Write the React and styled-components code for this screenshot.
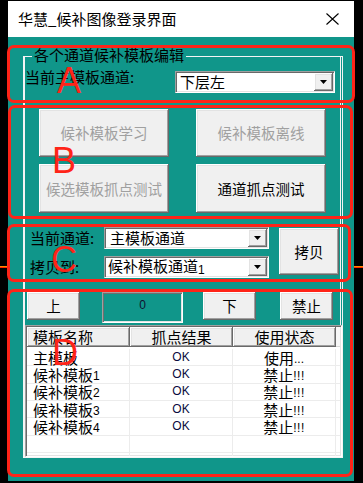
import React from 'react';
import styled, { createGlobalStyle } from 'styled-components';

const TEAL = '#10968a';
const RED = '#ff2418';
const CJK = `"Noto Sans CJK SC", "Noto Sans", sans-serif`;
const LATIN = `"Liberation Sans", Arial, sans-serif`;

const Global = createGlobalStyle`
  html, body { margin: 0; padding: 0; background: #000; }
  body { width: 363px; height: 483px; overflow: hidden; font-family: ${CJK}; color: #000; }
  * { box-sizing: border-box; }
`;

const raised = `
  background: #f0f0f0;
  border: none;
  box-shadow: inset -1px -1px 0 #696969, inset 1px 1px 0 #ffffff, inset -2px -2px 0 #a0a0a0, inset 2px 2px 0 #e3e3e3;
`;

const Page = styled.div`
  position: relative;
  width: 363px;
  height: 483px;
  background: #000;
  padding-top: 1px;
`;

const OrangeRule = styled.div`
  position: absolute;
  left: 0;
  top: 266px;
  width: 363px;
  height: 2px;
  border-top: 1px solid #ff8a00;
  border-bottom: 1px solid #ff2a00;
  z-index: 0;
`;

const Window = styled.div`
  position: relative;
  z-index: 1;
  margin-left: 8px;
  width: 346px;
  height: 480px;
  display: flex;
  flex-direction: column;
`;

const TitleBar = styled.div`
  height: 36px;
  background: #fff;
  display: flex;
  align-items: center;
  justify-content: space-between;
  padding: 0 15px 0 10px;
`;

const Title = styled.span`
  font-size: 15px;
  line-height: 18px;
  white-space: nowrap;
`;

const Body = styled.div`
  flex: 1;
  background: ${TEAL};
  padding: 19px 11px 0 15px;
`;

const GroupBox = styled.div`
  position: relative;
  display: flex;
  flex-direction: column;
  border-top: 1px solid #f4f4f4;
  border-left: 2px solid #f4f4f4;
  border-right: 3px double #f4f4f4;
  border-bottom: 1px solid #f4f4f4;
`;

const Legend = styled.span`
  position: absolute;
  left: 7px;
  top: -11px;
  padding: 0 2px;
  background: ${TEAL};
  font-size: 15px;
  line-height: 18px;
  white-space: nowrap;
`;

const RowA = styled.div`
  margin-top: 11px;
  display: flex;
  align-items: flex-start;
`;

const FieldLabel = styled.span`
  width: ${p => p.$w}px;
  flex: none;
  font-size: 15px;
  line-height: 18px;
  white-space: nowrap;
`;

const ComboBox = styled.div`
  flex: none;
  width: ${p => p.$w}px;
  height: 22px;
  margin-top: ${p => p.$mt || 0}px;
  background: #fff;
  border-top: 1px solid #a0a0a0;
  border-left: 1px solid #a0a0a0;
  border-right: 1px solid #ffffff;
  border-bottom: 1px solid #ffffff;
  box-shadow: inset 1px 1px 0 #696969, inset -1px -1px 0 #e3e3e3;
  padding: 1px;
  display: flex;
  align-items: center;
`;

const ComboText = styled.span`
  flex: 1;
  min-width: 0;
  padding-left: ${p => p.$pad}px;
  font-size: 15px;
  line-height: 18px;
  white-space: nowrap;
`;

const DropButton = styled.span`
  ${raised}
  width: 19px;
  height: 18px;
  flex: none;
  display: flex;
  align-items: center;
  justify-content: center;
`;

const ButtonGrid = styled.div`
  margin-top: 16px;
  padding-left: 14px;
  display: grid;
  grid-template-columns: 130px 130px;
  grid-template-rows: 48px 49px;
  column-gap: 27px;
  row-gap: 7px;
`;

const Btn = styled.button`
  ${raised}
  width: ${p => (p.$w ? `${p.$w}px` : '100%')};
  height: ${p => (p.$h ? `${p.$h}px` : '100%')};
  margin-left: ${p => p.$ml || 0}px;
  margin-top: ${p => p.$mt || 0}px;
  flex: none;
  padding: 0;
  font-family: ${CJK};
  font-size: 14.5px;
  line-height: 18px;
  color: ${p => (p.$muted ? '#a0a0a0' : '#000')};
  white-space: nowrap;
`;

const RowC = styled.div`
  margin-top: 14px;
  padding-left: 5px;
  display: flex;
  align-items: flex-start;
`;

const ComboColumn = styled.div`
  display: flex;
  flex-direction: column;
  gap: 7px;
`;

const ComboLine = styled.div`
  display: flex;
  align-items: center;
`;

const RowD = styled.div`
  margin-top: 14px;
  padding-left: 2px;
  display: flex;
  align-items: flex-start;
`;

const CounterField = styled.div`
  flex: none;
  width: 81px;
  height: 31px;
  margin-left: ${p => p.$ml}px;
  background: ${TEAL};
  border-top: 1px solid #a0a0a0;
  border-left: 1px solid #a0a0a0;
  border-right: 1px solid #ffffff;
  border-bottom: 1px solid #ffffff;
  box-shadow: inset 1px 1px 0 #6f6f6f, inset -1px -1px 0 #e3e3e3;
  padding-top: 4px;
  text-align: center;
  font-family: ${LATIN};
  font-size: 12px;
  line-height: 16px;
  color: #101030;
`;

const ListView = styled.div`
  margin-top: 2px;
  width: 317px;
  height: 132px;
  flex: none;
  background: #fff;
  border-top: 1px solid #a0a0a0;
  border-left: 1px solid #a0a0a0;
  border-right: 1px solid #ffffff;
  border-bottom: 1px solid #ffffff;
  box-shadow: inset 1px 1px 0 #696969, inset -1px -1px 0 #e3e3e3;
  padding: 1px;
  overflow: hidden;
  display: flex;
  flex-direction: column;
`;

const HeaderRow = styled.div`
  display: flex;
  height: 20px;
  flex: none;
`;

const HeaderCell = styled.div`
  ${raised}
  width: 103px;
  flex: none;
  display: flex;
  align-items: center;
  justify-content: ${p => (p.$align === 'left' ? 'flex-start' : 'center')};
  padding-left: ${p => (p.$align === 'left' ? 6 : 0)}px;
  font-size: 15px;
  line-height: 18px;
  white-space: nowrap;
`;

const HeaderFiller = styled.div`
  flex: 1;
  background: #f7f7f7;
  border-bottom: 1px solid #d8d8d8;
`;

const RowsArea = styled.div`
  padding-top: 2px;
  display: flex;
  flex-direction: column;
`;

const DataRow = styled.div`
  display: flex;
  height: 17.33px;
  flex: none;
  border-bottom: 1px solid #ececec;
`;

const DataCell = styled.div`
  width: 103px;
  flex: none;
  border-right: 1px solid #ececec;
  display: flex;
  align-items: center;
  justify-content: ${p => (p.$align === 'left' ? 'flex-start' : 'center')};
  padding-left: ${p => (p.$align === 'left' ? 6 : 0)}px;
  font-size: 15px;
  line-height: 17px;
  white-space: nowrap;
`;

const Small = styled.span`
  font-family: ${LATIN};
  font-size: 12px;
  position: relative;
  top: ${p => (p.$raise ? 0 : 2)}px;
  color: ${p => p.$color || '#000'};
  letter-spacing: ${p => p.$ls || 0}px;
`;

const Annotation = styled.div`
  position: absolute;
  left: ${p => p.$x}px;
  top: ${p => p.$y}px;
  width: ${p => p.$w}px;
  height: ${p => p.$h}px;
  border: 3px solid ${RED};
  border-radius: 7px;
  z-index: 2;
  pointer-events: none;
`;

const Letter = styled.span`
  position: absolute;
  left: ${p => p.$x}px;
  top: ${p => p.$y}px;
  font-family: ${LATIN};
  font-size: 36px;
  line-height: 36px;
  color: ${RED};
  z-index: 3;
`;

const CloseIcon = () => (
  <svg width="13" height="12" viewBox="0 0 13 12" fill="none">
    <path d="M0.5 0.5 L12.5 11.5 M12.5 0.5 L0.5 11.5" stroke="#000" strokeWidth="1.1" />
  </svg>
);

const DownArrow = () => (
  <svg width="7" height="4" viewBox="0 0 7 4">
    <path d="M0 0 H7 L3.5 4 Z" fill="#000" />
  </svg>
);

const Combo = ({ width, pad = 3, mt, children }) => (
  <ComboBox $w={width} $mt={mt}>
    <ComboText $pad={pad}>{children}</ComboText>
    <DropButton>
      <DownArrow />
    </DropButton>
  </ComboBox>
);

const columns = [
  { key: 'name', label: '模板名称', align: 'left' },
  { key: 'result', label: '抓点结果', align: 'center' },
  { key: 'state', label: '使用状态', align: 'center' },
];

const rows = [
  { name: '主模板', num: '', result: 'OK', state: '使用', mark: '...' },
  { name: '候补模板', num: '1', result: 'OK', state: '禁止', mark: '!!!' },
  { name: '候补模板', num: '2', result: 'OK', state: '禁止', mark: '!!!' },
  { name: '候补模板', num: '3', result: 'OK', state: '禁止', mark: '!!!' },
  { name: '候补模板', num: '4', result: 'OK', state: '禁止', mark: '!!!' },
  null,
  null,
];

const boxes = [
  { id: 'A', x: 7, y: 45, w: 348, h: 58, lx: 57, ly: 63 },
  { id: 'B', x: 8, y: 105, w: 345, h: 114, lx: 52, ly: 143 },
  { id: 'C', x: 7, y: 224, w: 344, h: 58, lx: 51, ly: 242 },
  { id: 'D', x: 7, y: 289, w: 346, h: 188, lx: 52, ly: 335 },
];

export default function App() {
  return (
    <>
      <Global />
      <Page>
        <OrangeRule />
        <Window>
          <TitleBar>
            <Title>华慧_候补图像登录界面</Title>
            <CloseIcon />
          </TitleBar>
          <Body>
            <GroupBox>
              <Legend>各个通道候补模板编辑</Legend>
              <RowA>
                <FieldLabel $w={150}>当前主模板通道:</FieldLabel>
                <Combo width={160} mt={3} pad={3}>下层左</Combo>
              </RowA>

              <ButtonGrid>
                <Btn $muted>候补模板学习</Btn>
                <Btn $muted>候补模板离线</Btn>
                <Btn $muted>候选模板抓点测试</Btn>
                <Btn>通道抓点测试</Btn>
              </ButtonGrid>

              <RowC>
                <ComboColumn>
                  <ComboLine>
                    <FieldLabel $w={74}>当前通道:</FieldLabel>
                    <Combo width={165} pad={4}>主模板通道</Combo>
                  </ComboLine>
                  <ComboLine>
                    <FieldLabel $w={74}>拷贝到:</FieldLabel>
                    <Combo width={165} pad={2}>
                      候补模板通道<Small>1</Small>
                    </Combo>
                  </ComboLine>
                </ComboColumn>
                <Btn $w={60} $h={47} $ml={10} $mt={1}>拷贝</Btn>
              </RowC>

              <RowD>
                <Btn $w={53} $h={28}>上</Btn>
                <CounterField $ml={22}>0</CounterField>
                <Btn $w={53} $h={28} $ml={20}>下</Btn>
                <Btn $w={53} $h={28} $ml={24}>禁止</Btn>
              </RowD>

              <ListView>
                <HeaderRow>
                  {columns.map(c => (
                    <HeaderCell key={c.key} $align={c.align}>{c.label}</HeaderCell>
                  ))}
                  <HeaderFiller />
                </HeaderRow>
                <RowsArea>
                  {rows.map((r, i) => (
                    <DataRow key={i}>
                      <DataCell $align="left">
                        {r && r.name}
                        {r && r.num && <Small>{r.num}</Small>}
                      </DataCell>
                      <DataCell $align="center">
                        {r && <Small $raise $color="#0a0a40">{r.result}</Small>}
                      </DataCell>
                      <DataCell $align="center">
                        {r && r.state}
                        {r && <Small $ls={r.mark === '!!!' ? 0.5 : 0}>{r.mark}</Small>}
                      </DataCell>
                    </DataRow>
                  ))}
                </RowsArea>
              </ListView>
            </GroupBox>
          </Body>
        </Window>

        {boxes.map(b => (
          <React.Fragment key={b.id}>
            <Annotation $x={b.x} $y={b.y} $w={b.w} $h={b.h} />
            <Letter $x={b.lx} $y={b.ly}>{b.id}</Letter>
          </React.Fragment>
        ))}
      </Page>
    </>
  );
}
